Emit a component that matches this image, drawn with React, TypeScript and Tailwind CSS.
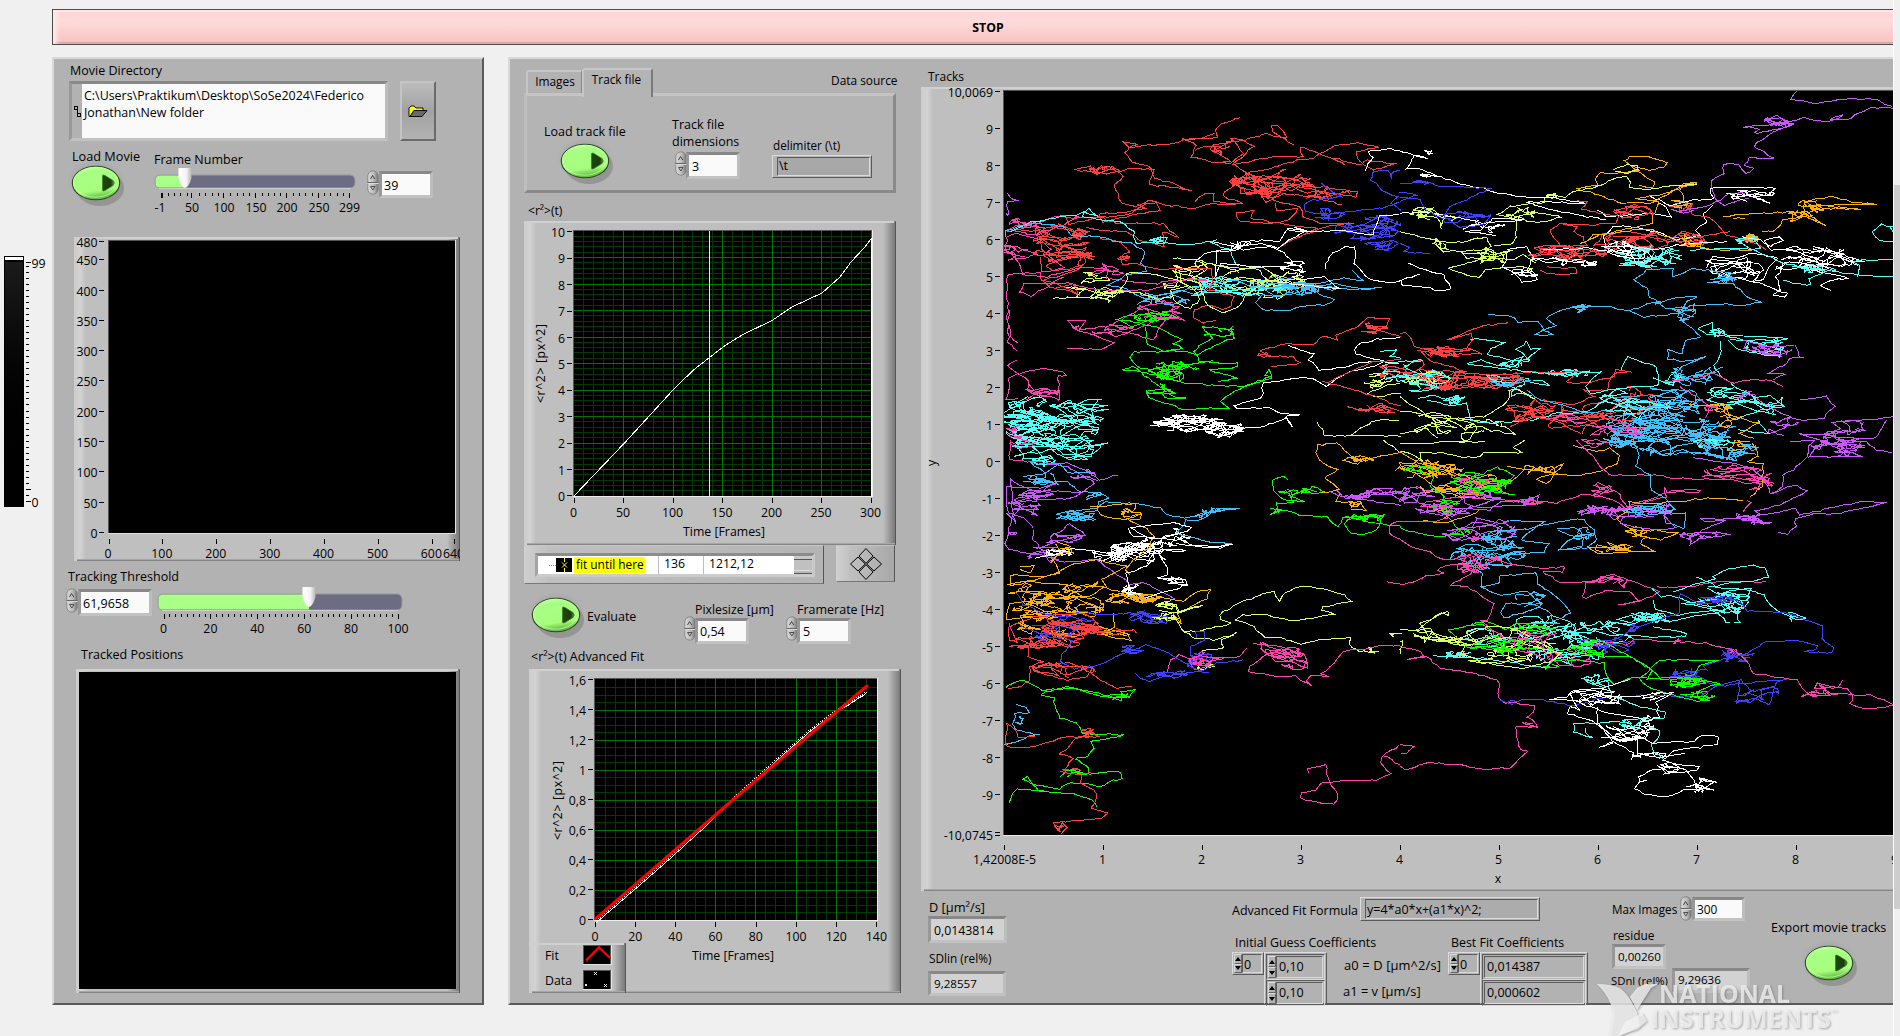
import React from "react";

/* ---------- palette ---------- */
const R = "#ff4040";
const W = "#ffffff";
const C = "#52fff6";
const B = "#3fc0ff";
const N = "#4040ff";
const P = "#ff40b4";
const V = "#cc55ff";
const Y = "#d8ff6a";
const O = "#ffb010";
const G = "#10ff00";

/* ---------- small building blocks ---------- */
function L({ className = "", children }: { className?: string; children: React.ReactNode }) {
  return <div className={"h-[17px] shrink-0 leading-[17px] whitespace-nowrap " + className}>{children}</div>;
}

function Well({ className = "", children }: { className?: string; children?: React.ReactNode }) {
  return (
    <div
      className={
        "shrink-0 overflow-hidden border-[3px] border-t-[#888888] border-r-[#bdbdbd] border-b-[#c2c2c2] border-l-[#989898] whitespace-nowrap " +
        className
      }
    >
      {children}
    </div>
  );
}

function Classic({ className = "", children }: { className?: string; children?: React.ReactNode }) {
  return (
    <div className={"flex shrink-0 border border-t-[#dcdcdc] border-r-[#5a5a5a] border-b-[#5a5a5a] border-l-[#dcdcdc] " + className}>
      {children}
    </div>
  );
}

function Inset({ className = "", children }: { className?: string; children?: React.ReactNode }) {
  return (
    <div
      className={
        "flex-1 border border-t-[#5a5a5a] border-r-[#dcdcdc] border-b-[#dcdcdc] border-l-[#5a5a5a] whitespace-nowrap " +
        className
      }
    >
      {children}
    </div>
  );
}

function Spinner({ className = "" }: { className?: string }) {
  return (
    <svg className={"shrink-0 " + className} width="12" height="25" viewBox="0 0 12 25">
      <rect x="0.8" y="0.8" width="10.4" height="23.4" rx="5.2" fill="url(#spin)" stroke="#7c7c7c" strokeWidth="0.8" />
      <path d="M0.5 12.5H11.5" stroke="#666" />
      <path d="M0.5 13.5H11.5" stroke="#dadada" />
      <path d="M3.5 9 L5.5 5.5 L7.8 9" fill="none" stroke="#444" />
      <path d="M3.5 16.5H8 L5.8 20 Z" fill="#c4c4c4" stroke="#444" strokeWidth="0.9" />
    </svg>
  );
}

function MiniArrows() {
  return (
    <div className="flex w-[8px] shrink-0 flex-col">
      <div className="flex flex-1 items-center justify-center border border-t-[#dcdcdc] border-r-[#666] border-b-[#666] border-l-[#dcdcdc]">
        <svg width="6" height="4" viewBox="0 0 6 4" className="shrink-0"><path d="M3 0L6 4H0Z" /></svg>
      </div>
      <div className="flex flex-1 items-center justify-center border border-t-[#dcdcdc] border-r-[#666] border-b-[#666] border-l-[#dcdcdc]">
        <svg width="6" height="4" viewBox="0 0 6 4" className="shrink-0"><path d="M0 0H6L3 4Z" /></svg>
      </div>
    </div>
  );
}

function GreenButton({ className = "" }: { className?: string }) {
  return (
    <svg className={"shrink-0 " + className} width="60" height="50" viewBox="0 0 60 50">
      <ellipse cx="29" cy="22" rx="29" ry="22" fill="url(#halo)" opacity="0.55" />
      <ellipse cx="33" cy="29" rx="24" ry="18" fill="#8b8b8b" opacity="0.75" />
      <ellipse cx="29" cy="24" rx="23.7" ry="16.8" fill="url(#grn)" stroke="#2c4a20" strokeWidth="1.1" />
      <ellipse cx="28.5" cy="23.2" rx="22" ry="15" fill="none" stroke="#c6ffb0" opacity="0.7" />
      <path d="M35.500 16.500Q36 15.600 38 16.500L46 21.500Q48.500 24 46 26.500L38 31.500Q36 32.400 35.500 31.500Z" fill="url(#arr)" stroke="#3f7a28" strokeWidth="0.8" />
    </svg>
  );
}

function Defs() {
  return (
    <svg className="absolute h-0 w-0">
      <defs>
        <linearGradient id="spin">
          <stop offset="0" stopColor="#dedede" />
          <stop offset="0.6" stopColor="#b8b8b8" />
          <stop offset="1" stopColor="#757575" />
        </linearGradient>
        <radialGradient id="halo">
          <stop offset="0.6" stopColor="#8c8c8c" stopOpacity="0.9" />
          <stop offset="1" stopColor="#a8a8a8" stopOpacity="0" />
        </radialGradient>
        <linearGradient id="grn" x1="0" x2="0.2" y1="0" y2="1">
          <stop offset="0" stopColor="#d4ffc0" />
          <stop offset="0.22" stopColor="#a9ff84" />
          <stop offset="0.8" stopColor="#a6fd7e" />
          <stop offset="1" stopColor="#66bf42" />
        </linearGradient>
        <linearGradient id="arr">
          <stop offset="0" stopColor="#1b4a0b" />
          <stop offset="0.7" stopColor="#1d3a10" />
          <stop offset="1" stopColor="#5a9a3c" />
        </linearGradient>
        <linearGradient id="bezL">
          <stop offset="0" stopColor="#cbcbcb" />
          <stop offset="0.5" stopColor="#d3d3d3" />
          <stop offset="1" stopColor="#bfbfbf" />
        </linearGradient>
        <linearGradient id="bezR">
          <stop offset="0" stopColor="#bfbfbf" />
          <stop offset="1" stopColor="#747474" />
        </linearGradient>
        <linearGradient id="knob">
          <stop offset="0" stopColor="#ffffff" />
          <stop offset="0.6" stopColor="#f4f4f4" />
          <stop offset="1" stopColor="#b5b5b5" />
        </linearGradient>
      </defs>
    </svg>
  );
}

function range(n: number) {
  return Array.from({ length: n }, (_, i) => i);
}

/* Raised bezel that surrounds every graph; drawn in local pixels. */
function Bezel({ w, h }: { w: number; h: number }) {
  return (
    <g shapeRendering="crispEdges">
      <rect width={w} height={h} fill="#bfbfbf" />
      <rect width={12} height={h} fill="url(#bezL)" />
      <rect x={w - 13} width={13} height={h} fill="url(#bezR)" />
      <rect width={w - 2} height={2} fill="#d0d0d0" />
      <path d={`M3 ${h - 1.5}H${w}`} stroke="#a6a6a6" />
      <path d={`M3 ${h - 0.5}H${w}`} stroke="#858585" />
      <path d={`M${w - 0.5} 1V${h}`} stroke="#555" />
    </g>
  );
}

type SliderProps = {
  w: number; h: number; x0: number; bar: number; barH: number; knob: number; drop: number;
  ticks: number[]; majors: number[]; labels: [number, string][];
};

function Slider({ w, h, x0, bar, barH, knob, drop, ticks, majors, labels }: SliderProps) {
  const ty = 7 + barH + drop;
  return (
    <svg width={w} height={h} className="shrink-0 overflow-visible" fontSize="12.3">
      <rect x={x0} y="7" width={bar} height={barH} rx="5" fill="#6c6c84" stroke="#9a9a9a" />
      <path d={`M${x0 + 4} ${7 + barH + 0.6}H${x0 + bar - 4}`} stroke="#d2d2d2" />
      <path
        d={`M${knob} 7.5H${x0 + 5}Q${x0 + 0.5} 7.5 ${x0 + 0.5} 12V${barH + 2}Q${x0 + 0.5} ${barH + 6.5} ${x0 + 5} ${barH + 6.5}H${knob}Z`}
        fill="#aaff87"
      />
      <path d={`M${knob - 6.5} 0H${knob + 6.5}V10Q${knob + 4} 19 ${knob} 20Q${knob - 4} 19 ${knob - 6.5} 10Z`} fill="url(#knob)" />
      <g shapeRendering="crispEdges" stroke="#000">
        {ticks.map((x) => <path key={x} d={`M${Math.floor(x) + 0.5} ${ty}v3`} />)}
        {majors.map((x) => <path key={x} d={`M${Math.floor(x) + 0.5} ${ty}v5`} />)}
      </g>
      {labels.map(([x, t]) => <text key={t} x={x} y={ty + 19} textAnchor="middle">{t}</text>)}
    </svg>
  );
}

/* ---------- graphs ---------- */
const IMAGE_Y: [number, string][] = [
  [4, "480"], [22, "450"], [53, "400"], [83, "350"], [113, "300"], [143, "250"],
  [174, "200"], [204, "150"], [234, "100"], [265, "50"], [295, "0"],
];

function ImageGraph() {
  return (
    <svg className="ml-[20px] shrink-0 overflow-hidden" width="386" height="324" fontSize="12.3">
      <Bezel w={386} h={324} />
      <rect x="34" y="3" width="348" height="294" fill="#e2e2e2" />
      <rect x="34" y="3" width="347" height="293" fill="#555" />
      <rect x="35" y="4" width="346" height="292" />
      <g shapeRendering="crispEdges" stroke="#000">
        {IMAGE_Y.map(([y, t]) => <path key={t} d={`M25 ${y + 0.5}h5`} />)}
        {range(7).map((i) => <path key={i} d={`M${Math.floor(35 + i * 53.9) + 0.5} 302v5`} />)}
        <path d="M380.5 302v5" />
      </g>
      {IMAGE_Y.map(([y, t]) => <text key={t} x="23.5" y={Math.max(y + 6, 10)} textAnchor="end">{t}</text>)}
      {range(7).map((i) => <text key={i} x={34 + i * 53.9} y="320.5" textAnchor="middle">{i * 100}</text>)}
      <text x="369" y="320.5">640</text>
    </svg>
  );
}

type GridProps = { x0: number; y0: number; w: number; h: number; dx: number; dy: number; sx: number; sy: number };

function Grid({ x0, y0, w, h, dx, dy, sx, sy }: GridProps) {
  const nx = Math.floor(w / dx + 0.5);
  const ny = Math.floor(h / dy + 0.5);
  const xs = range(nx).slice(1);
  const ys = range(ny).slice(1);
  const v = (i: number) => `M${Math.floor(x0 + i * dx) + 0.5} ${y0}v${h}`;
  const r = (i: number) => `M${x0} ${Math.floor(y0 + h - i * dy) + 0.5}h${w}`;
  return (
    <g shapeRendering="crispEdges" fill="none">
      <path d={xs.filter((i) => i % sx).map(v).join("") + ys.filter((i) => i % sy).map(r).join("")} stroke="#003c00" />
      <path d={xs.filter((i) => i % sx === 0).map(v).join("") + ys.filter((i) => i % sy === 0).map(r).join("")} stroke="#007800" />
    </g>
  );
}

function MsdGraph() {
  return (
    <svg className="shrink-0" width="372" height="324" viewBox="524 221 372 324" fontSize="12.3">
      <g transform="translate(524 221)"><Bezel w={372} h={324} /></g>
      <rect x="573" y="230" width="300" height="267" fill="#eee" />
      <rect x="573" y="230" width="299" height="266" fill="#555" />
      <rect x="574" y="231" width="297" height="265" />
      <Grid x0={574} y0={231} w={297} h={265} dx={9.9} dy={5.3} sx={5} sy={5} />
      <path
        d="M574 496L624.5 443 673 390 693.5 370 709.5 357.5 725 345.5 743 334.5 772 320.5 792 307 808 299.5 822 293 840 277 851 262 864 248 871 239V496"
        fill="none" stroke="#fff" shapeRendering="crispEdges"
      />
      <path d="M709.5 231V496" stroke="#ffff40" shapeRendering="crispEdges" />
      {range(11).map((i) => (
        <g key={i}>
          <path d={`M567 ${Math.floor(495.8 - i * 26.4) + 0.5}h5`} stroke="#000" shapeRendering="crispEdges" />
          <text x="565" y={501 - i * 26.4} textAnchor="end">{i}</text>
        </g>
      ))}
      {range(7).map((i) => (
        <g key={i}>
          <path d={`M${Math.floor(574.2 + i * 49.5) + 0.5} 498v5`} stroke="#000" shapeRendering="crispEdges" />
          <text x={573.5 + i * 49.5} y="517" textAnchor="middle">{i * 50}</text>
        </g>
      ))}
      <text x="683" y="536" textLength="82">Time [Frames]</text>
      <text transform="translate(544.5 403) rotate(-90)" textLength="79">{"<r^2> [px^2]"}</text>
    </svg>
  );
}

const FIT_LABELS = ["0", "0,2", "0,4", "0,6", "0,8", "1", "1,2", "1,4", "1,6"];
const FIT_DATA = [
  [597, 921], [633, 890], [673, 855], [700, 830.5], [733, 799], [757, 777.5], [783, 754],
  [813, 728], [833, 713], [850, 703], [867, 692],
];

function fitY(x: number) {
  const k = Math.max(1, FIT_DATA.findIndex((p) => p[0] >= x));
  const [a, b] = [FIT_DATA[k - 1], FIT_DATA[k]];
  return a[1] + ((b[1] - a[1]) * (x - a[0])) / (b[0] - a[0]);
}

function FitGraph() {
  const marks = range(135).map((i) => {
    const x = Math.round(597 + i * 2);
    const y = Math.round(fitY(x));
    return `M${x - 1} ${y - 1}h1v1h1v1h-1v-1h-1zM${x + 1} ${y - 1}h1v1h-1zM${x - 1} ${y + 1}h1v1h-1z`;
  }).join("");
  return (
    <svg className="shrink-0" width="372" height="324" viewBox="529 669 372 324" fontSize="12.3">
      <g transform="translate(529 669)"><Bezel w={372} h={324} /></g>
      <rect x="594" y="678" width="284" height="243" fill="#eee" />
      <rect x="594" y="678" width="283" height="242" fill="#555" />
      <rect x="595" y="679" width="282" height="241" />
      <Grid x0={595} y0={679} w={282} h={241} dx={10.05} dy={7.5} sx={4} sy={4} />
      <path d={marks} fill="#fff" shapeRendering="crispEdges" />
      <path d="M596 918.5L640 880.5 731 801.500 867 686" fill="none" stroke="#f00" strokeWidth="3" strokeLinecap="round" />
      {FIT_LABELS.map((t, i) => (
        <g key={t}>
          <path d={`M588 ${919.5 - i * 30}h5`} stroke="#000" shapeRendering="crispEdges" />
          <text x="586" y={925 - i * 30} textAnchor="end">{t}</text>
        </g>
      ))}
      {range(8).map((i) => (
        <g key={i}>
          <path d={`M${Math.floor(595.3 + i * 40.2) + 0.5} 922v5`} stroke="#000" shapeRendering="crispEdges" />
          <text x={595 + i * 40.2} y="941" textAnchor="middle">{i * 20}</text>
        </g>
      ))}
      <text x="692" y="960" textLength="82">Time [Frames]</text>
      <text transform="translate(561.5 840) rotate(-90)" textLength="79">{"<r^2> [px^2]"}</text>
      <g transform="translate(529 943)">
        <Bezel w={97} h={50} />
        <text x="16" y="17">Fit</text>
        <text x="16" y="42">Data</text>
        <g shapeRendering="crispEdges">
          <path d="M54 2h29v20h-29zM54 27h29v20h-29z" fill="#e4e4e4" />
          <path d="M54 2h28v19h-28zM54 27h28v19h-28z" fill="#555" />
          <path d="M55 3h26v18h-26zM55 28h26v18h-26z" />
        </g>
        <path d="M57 17.5L70 4.5L81 15" fill="none" stroke="#f00" strokeWidth="2.4" />
        <path d="M65 29l3 3m0-3l-3 3M56 41l2 2m0-2l-2 2M75 41l3 3m0-3l-3 3" stroke="#fff" strokeWidth="0.9" />
      </g>
    </svg>
  );
}

/* ---------- particle tracks ---------- */
let seed = 11;
function rnd() {
  seed = (seed + 0x6d2b79f5) | 0;
  let t = Math.imul(seed ^ (seed >>> 15), 1 | seed);
  t = (t + Math.imul(t ^ (t >>> 7), 61 | t)) ^ t;
  return ((t ^ (t >>> 14)) >>> 0) / 4294967296 - 0.5;
}

/* The plane is split in four tiles; track coordinates are thirds of a pixel inside a tile. */
type Tile = [number, number];
const NW: Tile = [900, 50];
const NE: Tile = [1400, 50];
const SW: Tile = [900, 440];
const SE: Tile = [1400, 440];

type Track = [Tile, string, string];
type Cloud = [Tile, string, number, number, number, number, number];

/* A path through way-points, roughened between them. */
function trackPath([[ox, oy], , pts]: Track) {
  const n = pts.trim().split(/[ ,]+/).map(Number);
  let x = ox + n[0] / 3;
  let y = oy + n[1] / 3;
  let d = `M${x.toFixed(1)} ${y.toFixed(1)}`;
  for (let i = 2; i < n.length; i += 2) {
    const tx = ox + n[i] / 3;
    const ty = oy + n[i + 1] / 3;
    const parts = Math.max(1, Math.round(Math.hypot(tx - x, ty - y) / 5));
    for (let k = 1; k <= parts; k++) {
      const f = k / parts;
      d += `L${(x + (tx - x) * f + rnd() * 2.6).toFixed(1)} ${(y + (ty - y) * f + rnd() * 1.5).toFixed(1)}`;
    }
    x = tx;
    y = ty;
  }
  return d;
}

/* A tangled walk kept inside an ellipse. */
function cloudPath([[ox, oy], , cx0, cy0, rx0, ry0, steps]: Cloud) {
  const cx = ox + cx0 / 3, cy = oy + cy0 / 3, rx = rx0 / 3, ry = ry0 / 3;
  let x = cx, y = cy, vx = 0, vy = 0;
  const s = Math.min(11, 3 + rx * 0.22);
  let d = `M${x.toFixed(1)} ${y.toFixed(1)}`;
  for (let i = 0; i < steps; i++) {
    vx = vx * 0.82 + rnd() * s - ((x - cx) / rx) * s * 0.04;
    vy = vy * 0.6 + rnd() * s * 0.55 - ((y - cy) / ry) * s * 0.03;
    if (Math.hypot((x + vx - cx) / rx, (y + vy - cy) / ry) > 1.1) {
      vx = -Math.sign(x - cx) * Math.abs(vx) * 0.6;
      vy = -Math.sign(y - cy) * Math.abs(vy) * 0.6;
    }
    x += vx;
    y += vy;
    d += `L${x.toFixed(1)} ${y.toFixed(1)}`;
  }
  return d;
}

const TRACKS: Track[] = [
  [NW, R, "1020,203 965,220 943,240 955,262 850,268 890,285 872,320 960,340 992,332 930,300 945,285 1035,270 1100,250 1122,258 1165,265 1130,225 1112,225 1115,245 1180,285"],
  [NW, R, "945,250 900,265 850,270 820,282 735,287 690,293 670,278 710,282 690,290 672,310 700,335 755,355 762,385 820,400 875,422 800,408 745,405 760,358 700,355 620,370 525,360 570,350 590,375 640,350 670,380 642,405 665,460 710,468 750,450 800,465 880,475 940,460 1005,465"],
  [NW, R, "885,455 910,430 940,430 940,455 1030,460 970,440 975,425 1040,370 1110,355 1190,330 1240,325 1300,288 1370,278 1435,290 1370,305 1370,325 1420,360 1490,342 1400,330 1380,345 1300,325 1335,343 1250,310 1200,290 1210,320 1130,320 1070,330 1000,345 1060,290 1030,270 990,265 1030,310 990,340 960,335"],
  [NW, R, "1000,340 1040,370 1090,385 1150,395 1200,410 1260,425 1370,440 1370,425 1300,415 1220,430 1180,410 1120,420 1060,410 1100,455 1150,430 1240,440 1325,465"],
  [NW, R, "1125,460 1130,480 1195,475 1170,510 1110,520 1020,515 1010,490 1060,480 1050,505 1140,520 1250,535 1170,570 1140,590 1200,560 1280,530 1360,520 1260,520 1210,500 1200,470 1120,450"],
  [NW, R, "710,462 740,475 650,490 600,490 605,515 780,480 770,460 740,460 690,490 640,500 500,505 505,525 600,500 650,520 790,520 835,562 790,545 790,590 730,575 680,545 600,540 560,530"],
  [NW, R, "350,545 420,540 430,560 500,565 480,580 550,610 555,640 520,665 470,680 430,690 470,700 540,735"],
  [NW, R, "600,565 660,575 690,605 660,620 665,645 700,640 780,660 840,655 930,655 940,690 930,720 1000,740 990,770 970,780 920,765 880,780 885,805 910,818 950,812"],
  [NW, R, "420,620 425,690 450,710 535,730 520,700 465,715"],
  [NW, P, "355,880 330,860 322,800 322,672 400,670 490,655 440,610 450,600 420,570 350,550 320,560 320,600 360,640 370,672 440,680 560,650 630,660 620,690"],
  [NW, P, "630,685 690,695 770,700 810,690 920,690 860,685 750,720 600,720 500,700 370,703 360,725 395,740 440,710 490,680"],
  [NW, P, "320,545 390,530 470,497 540,500 490,525 400,555 330,540 350,525 420,520 370,520"],
  [NW, P, "500,895 600,900 640,880 600,860 520,835 505,810 555,812 540,840 600,830 700,850 760,868 780,830 820,790 850,810 780,800 740,825 650,860 630,850 620,830 690,795 740,765 820,760"],
  [NW, P, "352,903 325,875 325,780"],
  [NW, P, "352,930 320,945 355,972 430,955 490,965 498,978 475,975 475,1030 480,1050 380,1020 385,990 355,972 325,985 322,1050 350,1045"],
  [NW, P, "380,1050 430,1015 475,1025 430,1040 400,1020 380,1000"],
  [NW, C, "330,545 395,515 500,498 545,490 570,475 592,500 555,485 545,500 640,515 660,515 700,545 710,578 790,580 800,560 750,570 810,580 880,585 950,570 935,580 990,600 1000,630 1020,650"],
  [NW, B, "315,565 320,540 400,520 490,530 510,555 600,560 640,575 690,575 735,605 725,640 740,665 680,675 620,705 660,710 720,740 760,750 800,740 870,715 940,705 1010,720"],
  [NW, B, "710,765 740,745 840,720 900,735 940,700 1010,690 1070,720 1100,700 1180,700 1260,700 1330,685 1390,690 1355,660"],
  [NW, B, "1065,760 1090,735 1140,740 1200,725 1230,710 1260,735 1305,750 1270,765 1200,770 1160,783 1090,780 1065,760"],
  [NW, B, "1280,710 1350,720 1445,712 1390,718 1300,700 1200,720"],
  [NW, W, "890,630 930,605 1010,602 1040,575 1100,570 1140,575 1160,540 1240,545 1180,530 1210,545 1130,595 1085,580 1010,590 990,600 950,600 945,680 960,640 1050,650 1160,648 1180,640 1150,605 1110,590 1030,600 940,575"],
  [NW, W, "1150,655 1215,665 1180,680 1190,690 1270,680 1325,718 1250,710 1130,695"],
  [NW, W, "1275,660 1272,645 1300,610 1340,590 1365,590 1365,640 1385,665 1400,685 1470,698 1500,692"],
  [NW, W, "1395,362 1405,340 1420,325 1405,305 1440,300 1460,295 1500,302"],
  [NW, W, "1160,535 1240,545 1330,540 1420,555 1440,500 1500,495"],
  [NW, N, "1265,400 1290,420 1325,440 1240,450 1215,460 1215,485 1280,495 1380,480 1450,475 1490,460 1500,460"],
  [NW, N, "1500,360 1470,375 1480,390 1465,360 1420,365 1415,390 1450,420 1490,440 1470,460 1500,480"],
  [NW, Y, "460,745 530,742 555,718 500,712 545,715 640,740 680,700 680,670 750,670 830,690 860,710 810,720 830,760 870,775 900,750 880,720 840,690 835,660 930,640 1010,660 1090,650 1140,690"],
  [NW, Y, "820,625 890,630 950,645 1080,660 1100,690 1030,740 1020,770 970,788 920,765 900,700 830,680"],
  [NW, Y, "500,740 580,745 650,720 720,730 780,750 820,735"],
  [NW, Y, "1250,1115 1270,1140 1275,1158 1400,1155 1500,1158"],
  [NW, Y, "1500,1110 1430,1110 1380,1135 1350,1160"],
  [NW, Y, "1500,1000 1460,1005 1400,1030 1420,1040 1500,1030"],
  [NW, G, "645,810 700,795 790,790 830,800 740,815 690,830 660,810 720,820 770,830 845,870 820,880 850,895 790,905 700,905 690,920 710,950 750,960 820,945"],
  [NW, G, "735,830 740,880 790,905 860,905 890,915 960,880 1000,865 995,845 940,830 905,832 940,865 900,885 885,905 900,935 1010,940 1010,950 930,960 1015,985 950,995"],
  [NW, G, "670,960 720,965 810,985 860,1000 940,1005 1040,1010 1115,985 1110,960 1090,975 1115,980 1030,1010 980,1040 965,1055 990,1075 920,1075 855,1080 800,1060 750,1045 740,1030 830,1030 780,1010 700,950 670,960"],
  [NW, W, "1200,1095 1140,1090 1105,1072 1010,1075 1000,1065 1085,1045 1090,1000 1190,985 1240,985 1280,1010 1310,985 1350,965 1420,950 1450,935 1500,940"],
  [NW, W, "1165,885 1200,900 1245,912 1225,930 1260,960 1340,950 1380,935 1460,935 1400,920 1365,910 1370,885 1430,868 1500,862"],
  [NW, W, "1000,1140 1080,1130 1160,1105 1175,1130 1155,1100 1195,1095"],
  [NW, R, "1080,903 1110,920 1180,920 1200,940 1110,952"],
  [NW, R, "1080,903 1160,880 1240,885 1270,860 1315,870 1310,855 1380,825 1400,805 1465,805 1460,830 1400,830 1470,850 1500,860"],
  [NW, R, "1280,1000 1350,965 1420,935 1500,928"],
  [NW, R, "1265,995 1350,1015 1440,1045 1500,1070"],
  [NW, R, "1340,1070 1400,1085 1450,1065 1500,1085"],
  [NW, C, "1440,905 1490,900 1470,920 1500,925"],
  [NW, V, "322,430 335,445 355,452 320,455 325,495 318,492"],

  [NE, V, "1190,123 1175,150 1225,155 1245,160 1330,147 1425,147 1450,160 1480,167"],
  [NE, V, "1480,175 1415,172 1380,187 1350,205 1290,207 1325,197 1285,217 1235,210 1210,203 1160,220 1100,210 1130,197 1165,215 1110,225 1030,230 1075,237 1060,250 1100,245 1180,225 1120,245 1060,287 1085,300 1118,325 1050,325 1030,345 1060,355 1035,372 1020,345 985,340 965,352 970,370 935,390 933,415 945,445 970,465 1045,445"],
  [NE, V, "1035,430 985,430 960,450 920,470 840,485 810,478 850,490 880,480"],
  [NE, W, "0,303 80,325 45,315 20,355 65,358 110,375 80,380 70,372 120,380 180,403 250,415 300,430 380,443 440,440 530,455 560,460 430,455 380,458 480,485 560,500 620,510"],
  [NE, W, "0,490 80,485 180,505 250,520 370,510 280,505 240,540 200,545 290,555"],
  [NE, W, "750,440 810,465 880,450 940,445 930,415 1040,412 1125,415 1110,435 1060,440 1110,460 1050,435 980,430 1040,455"],
  [NE, W, "590,480 620,500 700,495 760,490 810,500 800,470 750,440"],
  [NE, W, "940,465 910,490 920,515 890,540 900,555 830,570 770,545 700,530 640,530 610,560 620,590 700,590 770,600 830,585 900,580 980,575"],
  [NE, W, "1025,560 1080,570 1110,590 1145,570 1140,560 1090,572 1110,600 1200,600 1300,605 1390,635 1350,635 1290,615 1280,640 1200,650 1280,670 1345,685 1290,690 1260,705 1290,720"],
  [NE, W, "920,655 940,620 1000,625 1060,610 1135,625 1110,650 1085,690 1055,695 1090,660 1075,640 1020,640 960,665 990,680 1080,700 1160,730 1155,742 1115,735 1140,720 1130,680 1150,640"],
  [NE, W, "430,600 560,595 600,600 640,605 700,600"],
  [NE, W, "25,640 60,655 130,675 155,715 120,722 60,708 10,705 5,690 60,670"],
  [NE, W, "320,600 380,590 400,620 380,660 415,690 365,697 340,665 310,650 325,600"],
  [NE, N, "0,400 90,395 110,407 200,412 275,415 240,430 200,450 150,470 130,500 180,530 250,525 270,500 180,485 110,500 80,480 60,450 0,440"],
  [NE, N, "0,455 50,435 0,425"],
  [NE, N, "0,580 30,590 10,605 90,610"],
  [NE, O, "670,333 690,320 745,320 800,337 790,350 745,362 700,350 670,330 720,370 765,395 760,415 720,405"],
  [NE, O, "720,362 650,370 600,368 587,385 590,405 530,415 600,435 650,457 700,460 760,458 840,410 890,398 850,402 840,420 855,455 830,460"],
  [NE, O, "890,400 780,435 710,445 780,455 760,500 755,520 650,545 580,555 560,575 545,580 600,555 700,540 760,540 790,560 860,565"],
  [NE, O, "970,500 1060,490 1160,487 1215,485 1210,455 1290,440 1370,458 1430,462 1290,465 1225,465 1380,478 1280,475 1215,490 1280,528 1215,500 1150,510 1130,540 1090,545"],
  [NE, O, "1055,600 940,600 860,580 850,560"],
  [NE, O, "1000,505 1035,505"],
  [NE, Y, "890,403 830,405 745,420 690,410 695,395 680,380 640,387 590,410 525,425 495,440 440,435 435,460 390,460 330,470 290,495 340,505 400,485 485,500 440,515 380,515 355,500 350,545 340,580 280,590"],
  [NE, Y, "640,360 680,343 710,345 715,360 680,370 645,362"],
  [NE, Y, "0,545 100,570 160,580 260,560 275,590 250,610 185,610 200,625 280,620 280,600 130,605 105,580"],
  [NE, Y, "145,655 200,675 240,682 260,660 330,650 400,655"],
  [NE, Y, "145,655 250,625 330,630 370,615 405,640"],
  [NE, R, "530,452 560,455 545,475 600,490 660,500 700,475 760,495 740,470 700,465 650,480"],
  [NE, R, "450,540 480,520 560,525 650,520 660,490"],
  [NE, R, "450,540 480,590 560,585 550,560 520,545 530,530 480,520"],
  [NE, R, "860,470 880,495 930,500 960,530 980,555 1070,580 1100,600"],
  [NE, R, "640,560 740,560 800,570 850,545 900,560 990,545"],
  [NE, R, "420,660 440,670 530,672 530,655 440,650"],
  [NE, C, "870,600 960,597 1080,595 1060,560 1010,570 1050,595 1150,640 1280,660 1370,675 1480,680"],
  [NE, C, "1480,627 1360,633 1380,645 1370,680"],
  [NE, C, "1480,575 1435,572 1415,545 1445,523 1480,530"],
  [NE, C, "1480,555 1470,530"],
  [NE, C, "1150,690 1180,700 1235,705 1230,685 1280,665 1180,650"],
  [NE, B, "265,793 330,797 350,815 410,815 430,835 410,855 460,853 430,840 465,825 440,805 480,780 530,770 620,770 690,783 740,762 780,758 830,740 890,740 860,755 830,800 860,805 885,790 880,760"],
  [NE, B, "690,783 730,800 800,795 840,790 870,765 990,762 1025,768 1085,755 1040,740 1000,700 925,700 1010,680 930,690 1000,670 960,665 880,655 820,680 820,655 740,660 700,690 745,715 750,740 800,775 860,770"],
  [NE, B, "840,805 900,860 860,870 845,910 805,900 805,925 850,935 920,920 850,950 830,970 880,990 910,985 970,950"],
  [NE, C, "895,835 940,815 940,835 985,855 1160,865 1080,880 990,860 920,852 895,835"],
  [NE, C, "985,870 1010,895 1070,910 1140,920 1140,900 1060,875 990,870"],
  [NE, C, "960,870 960,920 940,945 960,980 1000,1005 1060,1040"],
  [NE, V, "1030,870 1100,890 1185,885 1195,920 1215,925 1180,920 1150,945 1105,970 1155,972 1115,990"],
  [NE, V, "1040,875 1035,895 1100,915 1140,915 1180,900"],
  [NE, V, "1200,1050 1280,1037 1305,1070 1275,1090 1270,1105 1210,1112 1150,1095 1100,1065 1060,1035 1020,1030"],
  [NE, V, "1480,1100 1430,1107 1300,1115 1320,1135 1270,1160 1370,1165 1430,1165 1460,1110"],
  [NE, P, "790,995 850,990 940,970 1000,1000 1050,990 1110,990 1150,1010"],
  [NE, P, "840,1010 890,1040 930,1070 920,1105"],
  [NE, R, "325,818 240,830 190,850 145,870 215,850 215,870 200,900"],
  [NE, R, "0,850 20,850 45,890 110,905 200,895 250,910 150,915 80,905 50,900"],
  [NE, R, "60,900 90,935 160,950 200,970 300,975 400,965 480,968 545,965 495,997 560,1000 640,980 650,960 700,965 640,970 620,1020 550,1020 580,1040 520,1065 430,1050"],
  [NE, C, "210,870 240,867 315,880 270,895 265,915 340,930 365,920 350,950 290,945 240,930 200,940 300,955 390,965 480,975 600,965 560,1010 570,1030 660,1015 780,1005 770,950 720,935 680,918 660,960"],
  [NE, C, "380,875 390,895 420,897 385,925 350,900 380,875"],
  [NE, Y, "0,1040 60,1080 80,1100 180,1110 220,1120 200,1140 140,1105 250,1100 320,1060 330,1020 360,1020 400,1045"],
  [NE, Y, "0,1150 80,1135 110,1165"],
  [NE, C, "80,1050 150,1065 200,1060 215,1110 260,1120 400,1110 470,1090 560,1085 640,1040"],
  [NE, B, "380,1020 420,1050 490,1065 560,1090 640,1080"],
  [NE, R, "330,1130 400,1100 460,1110 540,1150"],
  [NE, C, "1000,1110 1080,1080 1150,1070 1110,1035 1050,1050 1000,1060"],
  [NE, C, "1075,1110 1090,1135 1110,1150 1010,1140"],
  [NE, O, "850,1060 900,1070 970,1060 990,1095 1075,1120 1020,1150 1060,1165"],

  [SW, P, "330,0 330,60 380,65 430,65"],
  [SW, V, "655,105 600,120 580,100 500,70 440,70 500,80 585,130 540,160 430,150 470,130 420,145 320,140 325,220 340,225 360,200 340,180 400,165 420,180 510,175 550,155"],
  [SW, V, "320,220 350,250 340,225 315,310 330,330 380,340 430,345 480,365 590,360 640,395 680,420 690,435 730,425 760,445 825,475"],
  [SW, V, "400,270 400,300 420,325 460,310 450,290 490,270 510,250 555,285 480,300 450,300"],
  [SW, V, "400,265 370,235 340,225 330,120 390,150 430,155"],
  [SW, B, "370,125 500,125 545,155 600,160 625,175 600,185 590,210 470,235 590,240 560,225 500,215 590,205 620,187 700,190 780,205 800,225 850,235 900,225 970,205 1018,205 940,215 900,240 860,240 830,280 920,305 995,312"],
  [SW, B, "370,110 430,100 480,70 500,100 580,100"],
  [SW, O, "570,200 640,195 710,190 700,215 730,220 720,240 640,235 600,225 590,205"],
  [SW, O, "680,235 720,260 740,265 760,290 750,320 700,360 680,390 690,405"],
  [SW, O, "460,360 480,400 420,410 330,405 330,440 400,420 460,405 520,370 600,360 680,380 640,400 605,420 620,445 660,455"],
  [SW, O, "470,305 510,320 480,330 465,315"],
  [SW, O, "360,380 400,380 390,400 360,390"],
  [SW, O, "320,435 370,425 500,435 545,445 500,470 420,480 330,490 320,540 350,535 430,535"],
  [SW, O, "700,475 800,475 850,485 890,455 935,450 920,475 860,510 835,520 840,550 820,520"],
  [SW, O, "640,520 640,560 610,580 630,590 690,600 680,580 600,560"],
  [SW, W, "685,265 700,290 780,295 860,275 875,260 820,250 760,255 690,262 740,290 840,300 880,315 940,320 995,312 960,325 900,322 830,310"],
  [SW, W, "405,355 460,345 520,325 600,335 650,350"],
  [SW, W, "750,370 700,395 680,400 685,450 665,455"],
  [SW, W, "780,350 800,380 800,405 770,415 860,420 865,435 800,430 865,435 740,470"],
  [SW, Y, "1010,577 965,600 970,625 910,632"],
  [SW, Y, "780,490 830,495 830,520 910,495 850,510 800,525 760,535 830,540 850,575 890,575 995,550 960,540 960,525 1010,490 1120,452 1135,485 1145,465 1200,438 1270,445 1330,465 1352,485 1270,500 1265,510 1305,523 1170,543 1100,525 1030,525 1010,540 1060,560 1090,590 1150,595 1200,612 1260,600 1350,595 1345,615 1380,635 1440,635"],
  [SW, Y, "850,575 880,592 940,600 1000,585"],
  [SW, P, "1500,615 1440,620 1330,635 1310,660 1290,680 1265,700 1285,712 1230,705 1220,725 1235,737 1190,710 1100,705 1050,695 1045,680 1100,645 1200,675 1220,685 1215,645 1150,620 1060,612"],
  [SW, P, "1040,625 1020,650 940,655 920,680 880,690 870,655 840,645 815,660 805,695"],
  [SW, N, "345,455 365,480 370,495 400,505 420,520 480,530 550,515 600,525 690,520 740,520 800,530 800,550 740,540"],
  [SW, N, "360,555 440,590 520,600 510,620 485,640 482,665 520,687 600,675 660,645 740,615 790,630 840,660 890,690 930,700"],
  [SW, N, "890,595 890,575 915,575 915,600 870,620 870,645"],
  [SW, N, "705,700 720,715 750,725 790,710 900,695 950,670 1025,660"],
  [SW, R, "695,738 650,745 600,720 570,700 540,675 580,685 560,710 500,720 430,700 400,690 450,675 540,680"],
  [SW, R, "325,745 350,745 390,720 390,680 430,665 380,650 385,620"],
  [SW, R, "710,580 700,570 600,575 520,570"],
  [SW, R, "330,550 325,600 350,605 330,560 400,530 550,520 600,550"],
  [SW, G, "318,745 320,735 370,722 430,750 530,745 600,760 660,780 665,755 705,750 690,770 600,770 500,740 440,755 425,765 460,775 465,800 480,835 530,850 550,880 670,885 620,895 570,905 580,925 565,950 525,955 570,985 570,1000"],
  [SW, G, "480,1010 500,990 570,1000 660,995 665,1018 640,1020 600,1040 550,1030 500,1030 480,1048 400,1035 370,1018 385,1010 415,1055 520,1060 580,1080 595,1100"],
  [SW, G, "328,1088 330,1070 350,1048 430,1052"],
  [SW, B, "348,793 375,800 390,820 345,820 340,850 350,870 420,885 385,890 350,905 312,915"],
  [SW, R, "320,850 318,920 350,925 400,920 500,890 600,890 545,870 575,865 570,880 520,900 500,930 480,940 520,955 500,980 490,995 535,1005 570,1000"],
  [SW, R, "320,850 350,870 355,895 405,890"],
  [SW, R, "545,1000 540,1030 585,1050 590,1075 575,1105 625,1120 610,1135 500,1145 460,1148 470,1170 490,1150 500,1165 480,1183"],
  [SW, P, "1225,998 1225,985 1275,973 1285,985 1280,1000 1290,1025 1315,1065 1300,1092 1250,1088 1200,1075 1205,1060 1250,1050 1260,1030 1340,1023 1430,1020 1470,1000 1440,970 1445,950 1500,915"],
  [SW, P, "1500,975 1465,950 1450,950"],
  [SW, P, "1460,425 1500,433"],
  [SW, P, "1500,297 1465,280 1470,255 1500,243"],
  [SW, G, "1165,120 1150,108 1120,120 1120,150 1150,180 1215,185 1170,165 1200,155 1280,160 1240,140 1220,155"],
  [SW, G, "1110,225 1130,205 1125,190 1180,190 1160,150"],
  [SW, G, "1110,205 1160,210 1200,225 1280,230 1310,260 1330,235 1360,230 1450,225 1430,270 1390,287 1350,280 1330,250 1360,225 1400,245 1500,260"],
  [SW, O, "1500,38 1400,60 1370,72 1330,60 1360,50 1310,10 1255,15 1250,40 1260,60 1310,90 1275,115 1320,148 1265,160"],
  [SW, O, "1320,160 1310,185 1380,185 1395,210 1350,210"],
  [SW, Y, "1450,0 1480,20 1500,35"],
  [SW, V, "1290,155 1340,175 1400,160 1500,155"],
  [SW, V, "1310,150 1330,170 1400,180 1500,195"],

  [SE, Y, "0,35 30,40 70,65 60,40 120,38 190,52 240,50 250,38 340,40 365,38 340,25 370,0"],
  [SE, Y, "0,10 80,10 150,5 250,5"],
  [SE, O, "0,35 60,70 130,90 200,110 260,140 320,130 370,95 380,75 440,100 490,70 480,85 440,130 410,120 440,105 540,105 600,95 650,70 655,45 630,25 590,35 520,18"],
  [SE, O, "320,80 400,90 460,100"],
  [SE, O, "0,85 50,100 110,145 180,150 180,170 280,180"],
  [SE, O, "60,140 80,160 140,150"],
  [SE, O, "70,240 130,250 200,230 240,210"],
  [SE, O, "1030,180 920,175 810,187 740,190 690,185 690,205 650,235 660,250 720,275 770,270 830,280 780,300 740,290 720,310 770,335 700,335 640,340 590,340 560,320 650,325"],
  [SE, O, "1050,170 1085,140 1090,70 1040,65 1075,50 1060,10"],
  [SE, P, "530,0 580,50 600,80 630,105 780,105 820,115 1000,120 1050,130 1120,130"],
  [SE, P, "0,245 100,245 140,235 160,200 60,200 80,185 180,170 300,180 390,180 470,190 560,160 650,185 680,210 560,215"],
  [SE, P, "590,125 650,155 680,200 740,180 820,150 900,150 895,160 800,155 790,140 800,170 720,190"],
  [SE, P, "0,297 40,325 90,335 120,357 150,360 220,340 280,360 350,375 440,385 495,380 490,395 430,395 480,427 600,425 600,410 640,405 740,440 780,455 730,480 690,490 655,493 720,485 690,455 620,450 560,475 550,470 560,430 600,415"],
  [SE, P, "0,435 40,425 80,410 130,400 110,390 150,375 200,375"],
  [SE, P, "215,400 150,437 200,440 280,490 265,540 240,545 310,590 420,600 440,650 480,675 540,680 570,670 570,620 620,605 680,615 700,598 830,605 920,610 1000,630 1040,660 1060,700 1130,712 1190,720 1210,750 1240,770 1310,760 1370,765 1410,765 1460,785 1480,795"],
  [SE, P, "1480,795 1440,805 1390,805 1350,790 1360,765 1340,745 1240,745 1250,730 1310,740 1330,720"],
  [SE, P, "1040,180 1050,190 1030,215"],
  [SE, P, "770,440 870,440 950,425 1095,425"],
  [SE, P, "0,620 60,635 75,650 20,658 80,650 120,685 200,695 295,720 298,775 320,787 405,795 400,815 385,830 415,860 345,860 355,920 380,935 330,983 240,988 160,972 90,968 20,988 0,980"],
  [SE, P, "0,912 40,920 20,940 0,940"],
  [SE, P, "300,590 345,600 345,630 400,640 440,665"],
  [SE, V, "0,155 40,175 60,190 150,205 270,210 300,185 370,185 420,165 410,190 240,205 190,190 190,170 240,165"],
  [SE, V, "1170,5 1240,0 1225,20 1225,50 1180,90 1150,105 1148,140 1110,160 1105,145 1060,85 1000,70 880,55"],
  [SE, V, "1240,30 1270,5 1330,30 1390,50 1290,50 1230,50 1250,15 1400,5 1430,30 1480,38"],
  [SE, V, "1120,160 1180,135 1218,150 1190,170 1110,205 1060,212 1090,225 1190,205 1200,225 1290,205 1380,185 1460,185 1410,200 1320,220 1240,222 1185,235 1190,260 1160,282 1135,280"],
  [SE, V, "1080,225 1000,235 910,245 905,235 970,240 910,270 870,290 870,315 900,295 990,285 940,275 840,285"],
  [SE, V, "800,190 790,225 830,265 780,270 720,265 660,250 670,230 760,230"],
  [SE, V, "530,215 580,200 640,215 700,200"],
  [SE, B, "700,0 720,45 705,80 750,105 755,150 800,180 825,210 780,215 700,200 720,225 800,220 855,220 855,265 800,250 790,230"],
  [SE, B, "475,330 560,325 590,300 580,270 550,235 500,240 410,260 360,300 450,310 430,335 370,340"],
  [SE, B, "470,265 530,265 560,290 500,300 480,330 550,320 550,290 510,285 470,270"],
  [SE, B, "230,390 250,400 240,440 300,430 300,410 330,405 410,400 415,430 470,470 515,520 460,545 455,520 395,490 320,490 300,520 310,535 400,510 430,490 410,475"],
  [SE, B, "240,440 300,465 380,455 405,475 420,490 370,500"],
  [SE, B, "330,240 430,245 400,265 300,275 240,300"],
  [SE, C, "820,455 880,435 945,415 940,410 985,385 1060,377 1095,382 1110,410 1050,425 1000,425 950,440 890,410"],
  [SE, C, "925,440 1050,450 1090,465 1110,495 1150,520 1190,540 1220,535 1170,515"],
  [SE, C, "755,445 780,470 830,470 880,490 940,500 1040,480 1050,445 990,450 960,465 920,445"],
  [SE, C, "760,480 770,510 830,525 950,510 1010,520 1020,550 980,545 950,520 870,530 800,545 690,520"],
  [SE, C, "440,600 530,570 600,545 640,580 740,590 860,590 860,580 760,560"],
  [SE, C, "100,645 160,650 250,655 380,675 440,685 460,660 520,640"],
  [SE, C, "580,735 620,720 640,770 690,790 740,805 800,815 790,835 740,840 700,860 690,850 640,845 590,850 520,850 525,875 580,895 560,880 560,865"],
  [SE, C, "740,860 780,870 775,900 750,915 760,935 790,955"],
  [SE, N, "300,780 340,795 320,785 410,778 460,785 520,798 600,775 720,765 820,768 900,770 950,740 1020,720 1060,755 1120,740"],
  [SE, N, "1020,720 1010,790 1060,775 1110,795 1120,760 1130,725 1160,718 1080,725 950,740 900,710 810,710"],
  [SE, N, "815,705 870,695 920,690 910,680 960,660 1040,640 1100,605 1190,603 1250,615 1250,630 1210,635 1295,640 1300,625 1265,595 1265,557 1200,535 1150,515 1040,513 1010,480 950,465 900,490 840,460 840,520 760,545 700,570 640,600 540,600"],
  [SE, N, "870,490 930,490 1000,480"],
  [SE, G, "0,262 30,275 100,290 190,282 170,260 150,240 120,200 130,170 90,140 100,110 40,90"],
  [SE, G, "190,130 290,80 340,105 330,125 260,145 345,165 280,155 200,140"],
  [SE, G, "435,690 460,660 540,660 610,670 620,710 640,735 700,710 760,715 840,710 960,730 900,750 870,770 945,770 890,785 800,760 740,740 720,715 780,660 960,660 900,675 880,705"],
  [SE, G, "480,550 350,550 320,570 260,545 140,570 200,620 260,625 330,625 420,625 500,630 600,600 700,655 770,700 780,720 850,715"],
  [SE, G, "600,650 690,650 760,690 740,720"],
  [SE, Y, "0,570 50,570 90,540 120,520 150,525 145,515 60,550 90,600 170,600 260,560 340,565 330,590 240,600"],
  [SE, Y, "90,580 140,605 200,610 185,640 240,665 330,680 370,685 460,660 480,640 400,620 350,600"],
  [SE, Y, "0,605 10,600 0,645"],
  [SE, W, "690,718 610,745 520,750 505,770 445,778 510,780 660,790 580,750 510,760 520,780 540,810 510,800 505,820 590,850 620,880 640,910 600,920 640,905 700,940 690,958 710,945 710,900 640,890 590,850 590,800"],
  [SE, W, "600,770 720,770 760,760 820,758 770,785 775,830 740,845 720,835 620,820 520,780"],
  [SE, W, "640,860 760,910 880,905 905,885 955,890 955,910 900,922 820,930 790,960 840,975 895,980 890,990 800,1000"],
  [SE, W, "710,940 780,955 850,942"],
  [SE, W, "740,1022 720,1025 720,1010 760,990 810,980 860,990 880,1020 890,1050 850,1050 820,1065 780,1070 730,1060 705,1045 720,1025"],
  [SE, W, "895,1040 945,1050 890,1045 910,1015 945,1025 890,1055"],
];

const CLOUDS: Cloud[] = [
  [NW, R, 950, 300, 75, 40, 40], [NW, R, 1120, 400, 120, 45, 220], [NW, R, 1110, 440, 40, 20, 40], [NW, R, 1270, 425, 100, 25, 60],
  [NW, R, 595, 360, 60, 14, 40], [NW, R, 450, 550, 110, 28, 90], [NW, R, 480, 590, 90, 35, 80], [NW, R, 500, 620, 80, 45, 70], [NW, R, 680, 630, 25, 15, 25],
  [NW, R, 1420, 830, 50, 20, 40], [NW, R, 1100, 915, 25, 12, 20], [NW, R, 1450, 1075, 70, 14, 50],
  [NW, P, 370, 600, 55, 60, 60], [NW, P, 620, 660, 60, 40, 40], [NW, P, 780, 790, 70, 40, 60], [NW, P, 640, 840, 60, 25, 50],
  [NW, P, 430, 1020, 55, 25, 45], [NW, P, 525, 830, 12, 10, 14], [NW, P, 400, 520, 80, 20, 40],
  [NW, Y, 580, 690, 50, 25, 40], [NW, Y, 900, 690, 110, 60, 90], [NW, Y, 1090, 700, 120, 55, 150], [NW, Y, 1440, 1010, 60, 40, 50], [NW, Y, 620, 730, 110, 25, 50],
  [NW, C, 980, 710, 120, 40, 140], [NW, C, 1110, 700, 60, 25, 60], [NW, C, 390, 1100, 80, 60, 330], [NW, C, 540, 1080, 90, 50, 140], [NW, C, 460, 1140, 140, 50, 230],
  [NW, C, 770, 565, 30, 14, 30],
  [NW, B, 810, 745, 90, 25, 60], [NW, B, 1150, 710, 110, 30, 100], [NW, B, 1260, 705, 90, 18, 50],
  [NW, W, 1180, 660, 40, 30, 40], [NW, W, 860, 1120, 120, 25, 180], [NW, W, 970, 1140, 60, 28, 150], [NW, W, 1020, 590, 80, 16, 40],
  [NW, G, 760, 800, 90, 18, 50], [NW, G, 880, 960, 130, 30, 100], [NW, G, 790, 975, 55, 15, 60], [NW, G, 800, 1030, 60, 30, 40], [NW, G, 960, 845, 50, 20, 30],
  [NW, N, 1400, 530, 100, 40, 170], [NW, N, 1300, 490, 80, 18, 50], [NW, N, 1450, 585, 60, 18, 60],
  [NW, P, 350, 1140, 36, 20, 30],

  [NE, V, 1145, 212, 55, 16, 60], [NE, W, 85, 310, 18, 14, 22], [NE, W, 85, 376, 22, 7, 20], [NE, N, 70, 397, 30, 8, 25], [NE, N, 200, 510, 80, 25, 50],
  [NE, Y, 90, 510, 75, 40, 80], [NE, Y, 440, 440, 30, 20, 30], [NE, Y, 355, 490, 55, 18, 50], [NE, Y, 290, 620, 60, 35, 80], [NE, Y, 130, 580, 40, 20, 30],
  [NE, W, 250, 530, 60, 25, 50], [NE, W, 370, 650, 50, 45, 60], [NE, W, 520, 630, 120, 20, 70], [NE, W, 1050, 435, 70, 18, 50],
  [NE, R, 700, 490, 70, 22, 60], [NE, R, 500, 610, 110, 25, 150], [NE, R, 700, 570, 130, 35, 110], [NE, R, 870, 570, 70, 20, 60], [NE, R, 845, 470, 40, 15, 40],
  [NE, O, 840, 455, 35, 20, 35], [NE, O, 870, 570, 50, 18, 40], [NE, O, 1055, 565, 24, 12, 160], [NE, O, 1240, 470, 60, 20, 60], [NE, O, 1210, 500, 60, 18, 50],
  [NE, C, 740, 620, 100, 35, 150], [NE, C, 1240, 655, 80, 14, 60], [NE, C, 1040, 570, 30, 14, 30], [NE, C, 720, 650, 60, 15, 40],
  [NE, W, 1240, 630, 130, 40, 140], [NE, W, 1000, 650, 90, 40, 80], [NE, W, 680, 610, 90, 40, 80],
  [NE, B, 550, 775, 28, 14, 50], [NE, B, 775, 760, 10, 8, 40], [NE, B, 960, 685, 50, 18, 40], [NE, B, 850, 790, 40, 22, 40],
  [NE, C, 1090, 885, 60, 30, 50], [NE, V, 1110, 900, 60, 20, 60], [NE, C, 960, 850, 40, 14, 40],
  [NE, R, 130, 990, 110, 30, 220], [NE, R, 270, 985, 100, 30, 110], [NE, R, 130, 905, 100, 16, 80], [NE, R, 30, 960, 90, 50, 70],
  [NE, Y, 80, 985, 80, 22, 80], [NE, Y, 60, 1100, 120, 60, 60], [NE, Y, 250, 1140, 110, 45, 60],
  [NE, C, 60, 960, 110, 60, 100], [NE, C, 130, 1050, 80, 16, 50], [NE, C, 500, 970, 110, 12, 50], [NE, C, 330, 930, 60, 20, 50], [NE, C, 340, 1000, 110, 40, 50],
  [NE, B, 330, 1000, 60, 22, 50], [NE, B, 880, 975, 70, 40, 100], [NE, B, 780, 1060, 140, 45, 200], [NE, B, 740, 1110, 140, 55, 230], [NE, B, 930, 1140, 80, 40, 110], [NE, B, 820, 1150, 200, 50, 200],
  [NE, R, 390, 1080, 70, 35, 90], [NE, R, 480, 1110, 130, 50, 100], [NE, R, 650, 1060, 120, 50, 80], [NE, P, 640, 1140, 90, 30, 80], [NE, P, 500, 1120, 60, 30, 50],
  [NE, C, 980, 1040, 60, 40, 80], [NE, C, 700, 1060, 110, 45, 90], [NE, C, 1080, 1060, 90, 40, 70], [NE, C, 820, 990, 60, 20, 40],
  [NE, O, 960, 1100, 70, 35, 60], [NE, V, 1150, 1130, 50, 40, 50], [NE, V, 1340, 1140, 70, 30, 50], [NE, V, 1040, 1035, 30, 14, 30], [NE, P, 930, 1080, 20, 40, 40], [NE, V, 1270, 1165, 100, 25, 40],

  [SW, C, 480, 30, 160, 38, 160], [SW, C, 430, 80, 50, 28, 50], [SW, P, 365, 10, 45, 25, 40],
  [SW, B, 450, 100, 100, 35, 60], [SW, B, 540, 225, 65, 18, 70], [SW, B, 930, 220, 70, 16, 50], [SW, B, 590, 170, 40, 12, 30],
  [SW, V, 390, 165, 65, 40, 60], [SW, V, 370, 190, 50, 50, 50], [SW, V, 570, 110, 60, 30, 30], [SW, V, 440, 340, 70, 22, 50], [SW, V, 340, 285, 16, 12, 14], [SW, V, 500, 310, 70, 30, 40],
  [SW, O, 700, 215, 35, 25, 50], [SW, O, 480, 340, 40, 40, 40], [SW, O, 425, 460, 105, 40, 110], [SW, O, 560, 470, 80, 50, 110], [SW, O, 700, 475, 90, 18, 130], [SW, O, 500, 515, 170, 30, 100], [SW, O, 380, 560, 55, 40, 50], [SW, O, 480, 590, 70, 20, 50], [SW, O, 640, 580, 50, 20, 30],
  [SW, W, 740, 335, 110, 35, 230], [SW, W, 790, 290, 80, 30, 70], [SW, W, 640, 345, 90, 22, 70], [SW, W, 460, 340, 60, 12, 50], [SW, W, 700, 450, 50, 18, 60], [SW, W, 825, 420, 40, 10, 40],
  [SW, Y, 820, 500, 50, 22, 40], [SW, Y, 800, 535, 50, 14, 40], [SW, Y, 915, 680, 30, 12, 20],
  [SW, N, 750, 530, 60, 20, 70], [SW, N, 430, 570, 70, 30, 60], [SW, N, 900, 660, 40, 35, 90], [SW, N, 690, 630, 40, 14, 50], [SW, N, 790, 700, 70, 16, 50], [SW, N, 540, 560, 80, 35, 40],
  [SW, R, 510, 560, 80, 40, 160], [SW, R, 400, 610, 80, 18, 100], [SW, R, 460, 600, 90, 25, 60], [SW, R, 620, 570, 90, 14, 50], [SW, R, 480, 695, 100, 28, 70], [SW, R, 560, 880, 35, 14, 30], [SW, R, 480, 1160, 20, 14, 24], [SW, R, 510, 990, 30, 14, 22],
  [SW, P, 1110, 640, 90, 30, 100], [SW, P, 910, 655, 70, 22, 70], [SW, P, 1180, 680, 45, 25, 30],
  [SW, G, 650, 770, 40, 12, 40], [SW, G, 520, 1000, 40, 12, 30], [SW, G, 1160, 150, 50, 30, 24], [SW, G, 1390, 245, 70, 22, 50], [SW, G, 1230, 155, 40, 10, 30], [SW, G, 1130, 210, 20, 15, 16],
  [SW, O, 1380, 55, 50, 12, 40], [SW, V, 1400, 160, 110, 18, 70], [SW, O, 1350, 185, 45, 18, 26], [SW, Y, 1480, 590, 25, 25, 22], [SW, Y, 1410, 630, 30, 10, 20],
  [SW, B, 370, 850, 25, 30, 22], [SW, O, 1500, 85, 14, 12, 10],

  [SE, O, 90, 90, 110, 30, 100], [SE, O, 190, 130, 110, 40, 100], [SE, O, 430, 95, 50, 18, 40], [SE, O, 100, 215, 60, 25, 40], [SE, O, 730, 275, 60, 20, 40], [SE, O, 640, 325, 60, 16, 60], [SE, O, 1030, 30, 50, 30, 40],
  [SE, G, 240, 125, 90, 35, 130], [SE, G, 60, 90, 60, 18, 40], [SE, G, 130, 200, 50, 40, 50], [SE, G, 185, 275, 22, 14, 26],
  [SE, V, 40, 165, 80, 28, 60], [SE, V, 240, 175, 60, 28, 70], [SE, V, 140, 210, 90, 25, 80], [SE, V, 240, 270, 110, 40, 120], [SE, V, 580, 210, 60, 16, 60], [SE, V, 740, 220, 110, 32, 100], [SE, V, 1060, 235, 60, 22, 70], [SE, V, 890, 285, 60, 18, 40], [SE, V, 1310, 25, 90, 26, 80],
  [SE, V, 400, 180, 45, 20, 30],
  [SE, B, 260, 340, 110, 45, 190], [SE, B, 350, 290, 100, 40, 90], [SE, B, 520, 290, 70, 40, 40], [SE, B, 750, 210, 80, 20, 60], [SE, B, 830, 20, 140, 28, 150], [SE, B, 990, 25, 80, 35, 100], [SE, B, 380, 490, 70, 35, 30], [SE, B, 700, 5, 120, 18, 80],
  [SE, P, 220, 360, 70, 38, 110], [SE, P, 620, 155, 45, 30, 50], [SE, P, 1010, 105, 100, 28, 100], [SE, P, 1070, 125, 50, 25, 50], [SE, P, 640, 430, 70, 20, 40], [SE, P, 420, 600, 90, 35, 70], [SE, P, 520, 640, 80, 35, 50], [SE, P, 840, 605, 22, 8, 22], [SE, P, 1010, 640, 25, 16, 30], [SE, P, 1250, 755, 70, 20, 40], [SE, P, 220, 300, 16, 22, 22], [SE, P, 400, 185, 40, 16, 30], [SE, P, 200, 135, 90, 20, 40],
  [SE, P, 580, 10, 40, 28, 34], [SE, P, 395, 850, 25, 12, 16],
  [SE, Y, 150, 590, 110, 35, 80], [SE, Y, 280, 640, 120, 40, 60], [SE, Y, 370, 610, 90, 50, 50],
  [SE, C, 290, 590, 100, 40, 60], [SE, C, 170, 645, 70, 10, 70], [SE, C, 430, 560, 100, 40, 90], [SE, C, 590, 590, 100, 45, 130], [SE, C, 760, 535, 110, 18, 80], [SE, C, 950, 490, 110, 35, 110], [SE, C, 600, 710, 50, 30, 50], [SE, C, 500, 640, 110, 30, 80], [SE, C, 720, 850, 60, 20, 50], [SE, C, 940, 10, 70, 14, 60], [SE, C, 640, 570, 60, 25, 50], [SE, C, 1175, 528, 30, 12, 24],
  [SE, G, 270, 600, 110, 50, 100], [SE, G, 400, 570, 80, 20, 40], [SE, G, 560, 640, 60, 35, 60], [SE, G, 860, 725, 55, 20, 130], [SE, G, 890, 770, 50, 18, 50], [SE, G, 450, 680, 26, 14, 24], [SE, G, 590, 610, 50, 14, 50],
  [SE, N, 640, 605, 60, 35, 70], [SE, N, 1010, 645, 50, 22, 80], [SE, N, 960, 480, 60, 16, 40], [SE, N, 870, 700, 60, 14, 40], [SE, N, 1050, 755, 80, 32, 40], [SE, N, 700, 565, 30, 10, 40],
  [SE, W, 590, 785, 80, 35, 80], [SE, W, 660, 880, 80, 28, 90], [SE, W, 740, 850, 40, 25, 50], [SE, W, 810, 985, 35, 20, 50], [SE, W, 885, 1045, 30, 14, 40], [SE, W, 920, 1025, 28, 14, 18], [SE, W, 760, 770, 40, 12, 26], [SE, W, 740, 945, 60, 10, 24],
];

const PATHS = [
  ...CLOUDS.map((c) => ({ d: cloudPath(c), color: c[1] })),
  ...TRACKS.map((t) => ({ d: trackPath(t), color: t[1] })),
];

function TracksGraph() {
  return (
    <svg className="shrink-0" width="972" height="804" viewBox="921 87 972 804" fontSize="12.3">
      <g transform="translate(921 87)"><Bezel w={1010} h={804} /></g>
      <rect x="1003" y="90" width="900" height="746" fill="#e8e8e8" />
      <rect x="1003" y="90" width="900" height="745" fill="#555" />
      <rect x="1004" y="91" width="900" height="744" />
      <svg x="1004" y="91" width="889" height="744" viewBox="1004 91 889 744">
        <g fill="none" shapeRendering="crispEdges" strokeWidth="1">
          {PATHS.map((p, i) => <path key={i} d={p.d} stroke={p.color} />)}
        </g>
      </svg>
      <g shapeRendering="crispEdges" stroke="#000">
        <path d="M995 91.5h5M995 832.5h5M995 835.5h5" />
        {range(19).map((i) => <path key={i} d={`M995 ${Math.floor(461.5 + (i - 9) * 37) + 0.5}h5`} />)}
        {range(10).map((i) => <path key={i} d={`M${Math.floor(1004.3 + i * 99) + 0.5} 845v5`} />)}
      </g>
      <text x="993" y="97" textAnchor="end">10,0069</text>
      {range(19).map((i) => <text key={i} x="993" y={467 + (i - 9) * 37} textAnchor="end">{9 - i}</text>)}
      <text x="993" y="840" textAnchor="end">-10,0745</text>
      <text x="1004.5" y="864" textAnchor="middle">1,42008E-5</text>
      {range(9).map((i) => <text key={i} x={1102.5 + i * 99} y="864" textAnchor="middle">{i + 1}</text>)}
      <text x="1498" y="883" textAnchor="middle">x</text>
      <text transform="translate(936 463) rotate(-90)" textAnchor="middle">y</text>
    </svg>
  );
}

/* ---------- panels ---------- */
function ColorRamp() {
  return (
    <div className="flex w-[52px] shrink-0 pt-[256px] pl-[4px]">
      <div className="h-[251px] w-[20px] shrink-0 border border-black bg-linear-to-b from-[#1c1c1c] to-black to-90%">
        <div className="h-[5px] border-b-2 border-black bg-white" />
      </div>
      <svg width="28" height="260" className="shrink-0" fontSize="12.3">
        <g shapeRendering="crispEdges" stroke="#000">
          {range(39).map((i) => <path key={i} d={`M2 ${Math.floor(10.3 + i * 6.03) + 0.5}h3`} />)}
          <path d="M2 6.5h5M2 233.5h5M2 245.5h5" />
        </g>
        <text x="7.5" y="12">99</text>
        <text x="7.5" y="251">0</text>
      </svg>
    </div>
  );
}

const FRAME_MAJORS = [9, 38.5, 70.5, 102.5, 133.5, 165.5, 196.5];

function LeftPanel() {
  return (
    <div className="flex h-[948px] w-[432px] shrink-0 flex-col border-2 border-t-[#d8d8d8] border-r-[#5a5a5a] border-b-[#5a5a5a] border-l-[#d8d8d8] bg-[#b2b2b2]">
      <div className="flex h-[22px] shrink-0 pt-[3px] pl-[16px]"><L>Movie Directory</L></div>
      <div className="flex h-[60px] shrink-0 pl-[15px]">
        <Well className="flex h-[60px] w-[319px]">
          <div className="flex w-[10px] shrink-0 items-center justify-center">
            <svg width="7" height="11" viewBox="0 0 7 11" fill="none" stroke="#000" shapeRendering="crispEdges">
              <path d="M0.5 0.5h3v3h-3zM3.5 3.5v4M3.5 7h3v3h-3z" />
            </svg>
          </div>
          <div className="flex-1 bg-[#fafafa] pt-[3px] pl-[2px] text-[12.43px] leading-[17px]">
            C:\Users\Praktikum\Desktop\SoSe2024\Federico<br />Jonathan\New folder
          </div>
        </Well>
        <div className="ml-[12px] flex w-[36px] items-center justify-center border-2 border-t-[#c4c4c4] border-r-[#6a6a6a] border-b-[#6a6a6a] border-l-[#c4c4c4] bg-linear-to-b from-[#bcbcbc] via-[#a2a2a2] to-[#b2b2b2]">
          <svg width="20" height="13" viewBox="0 0 20 13" stroke="#000" strokeWidth="0.9">
            <path d="M1 11.5V3L3 1H6L8 3H15V5.5H6L2 11.5Z" fill="#ffff00" />
            <path d="M6 5.5H19L14 11.5H2Z" fill="#6a6a6a" />
          </svg>
        </div>
      </div>
      <div className="flex h-[96px] shrink-0">
        <div className="flex w-[99px] shrink-0 flex-col pt-[7px]">
          <L className="ml-[18px] text-[12.7px]">Load Movie</L>
          <GreenButton className="-mt-[6px] ml-[13px]" />
        </div>
        <div className="flex w-[214px] shrink-0 flex-col pt-[10px]">
          <L className="ml-[1px]">Frame Number</L>
          <Slider
            w={210} h={60} x0={2} bar={200} barH={13} knob={32} drop={5}
            ticks={range(31).map((i) => 9 + i * 6.25).filter((x) => !FRAME_MAJORS.some((m) => Math.abs(m - x) < 3))}
            majors={[...FRAME_MAJORS, 8]}
            labels={[[7, "-1"], [39, "50"], [71, "100"], [103, "150"], [134, "200"], [166, "250"], [196.5, "299"]]}
          />
        </div>
        <div className="flex pt-[29px]">
          <Spinner />
          <Well className="mt-[1px] h-[27px] w-[54px] bg-[#fafafa] pt-[3px] pl-[2px] leading-[17px]">39</Well>
        </div>
      </div>
      <ImageGraph />
      <div className="flex h-[108px] shrink-0 flex-col">
        <L className="mt-[7px] ml-[14px]">Tracking Threshold</L>
        <div className="flex h-[52px] pt-[2px]">
          <Spinner className="mt-[1px] ml-[12px]" />
          <Well className="mt-[2px] h-[27px] w-[74px] bg-[#fafafa] pt-[3px] pl-[2px] leading-[17px]">61,9658</Well>
          <Slider
            w={250} h={50} x0={6} bar={244} barH={16} knob={157} drop={4}
            ticks={range(41).filter((i) => i % 8).map((i) => 12 + i * 5.86)}
            majors={range(6).map((i) => 12 + i * 46.9)}
            labels={range(6).map((i): [number, string] => [11.5 + i * 46.9, String(i * 20)])}
          />
        </div>
        <L className="mt-[9px] ml-[27px]">Tracked Positions</L>
      </div>
      <svg className="ml-[22px] shrink-0" width="384" height="324">
        <Bezel w={384} h={324} />
        <rect x="3" y="3" width="377" height="317" />
      </svg>
    </div>
  );
}

function CursorLegend() {
  return (
    <div className="flex h-[39px] w-[300px] border border-t-[#c8c8c8] border-r-[#555] border-b-[#777] border-l-[#cfcfcf] bg-linear-to-r from-[#cfcfcf] from-0% via-[#bfbfbf] via-8% to-[#b4b4b4] pt-[7px] pl-[10px]">
      <div className="flex h-[24px] w-[280px] border-[3px] border-t-[#8c8c8c] border-r-[#c8c8c8] border-b-[#cccccc] border-l-[#a4a4a4]">
        <div className="flex w-[256px] bg-white leading-[17px]">
          <div className="flex w-[121px] items-center border-r border-[#c0c0c0]">
            <svg width="36" height="16" className="shrink-0">
              <path d="M11 8.5H18" stroke="#888" strokeDasharray="1 1" />
              <rect x="18" y="1" width="16" height="14" />
              <path d="M26.5 1V5M26.5 11V15M24 5.5L29 10.5M29 5.5L24 10.5" stroke="#ffff30" />
            </svg>
            <span className="-mt-[1px] h-[16px] bg-[#ffff00] pr-[1px] pl-[2px] text-[11.9px] leading-[15px]">fit until here</span>
          </div>
          <div className="w-[45px] border-r border-[#c0c0c0] pl-[5px] text-[12.3px] leading-[16px]">136</div>
          <div className="flex-1 pl-[5px] text-[12.2px] leading-[16px]">1212,12</div>
        </div>
        <div className="flex flex-1 flex-col justify-between bg-[#c0c0c0]">
          <div className="h-[4px] border-b border-[#555] bg-[#c8c8c8]" />
          <div className="h-[4px] border-t border-b border-t-[#ddd] border-b-[#555] bg-[#bbb]" />
        </div>
      </div>
    </div>
  );
}

function MiddleColumn() {
  return (
    <div className="flex w-[411px] shrink-0 flex-col pl-[14px]">
      <div className="flex h-[34px] shrink-0 items-end text-[11.9px]">
        <div className="ml-[2px] flex h-[23px] w-[56px] justify-center rounded-tl-[3px] border-t-2 border-r border-l-2 border-t-[#c6c6c6] border-r-[#8a8a8a] border-l-[#c6c6c6] pt-[1px] pl-[1px]">
          <L>Images</L>
        </div>
        <div className="relative z-10 -mb-[4px] flex h-[29px] w-[71px] justify-center rounded-t-[3px] border-t-2 border-r-2 border-l-2 border-t-[#c6c6c6] border-r-[#7a7a7a] border-l-[#c6c6c6] bg-[#b4b4b4] pt-[1px] text-[11.8px]">
          <L className="-ml-[2px]">Track file</L>
        </div>
        <L className="mb-[4px] ml-[178px]">Data source</L>
      </div>
      <div className="flex h-[100px] w-[372px] shrink-0 border-[3px] border-t-[#c4c4c4] border-r-[#8a8a8a] border-b-[#8a8a8a] border-l-[#bebebe] bg-[#b4b4b4]">
        <div className="flex w-[145px] shrink-0 flex-col pt-[27px]">
          <L className="ml-[17px]">Load track file</L>
          <GreenButton className="-mt-[3px] ml-[29px]" />
        </div>
        <div className="flex w-[97px] shrink-0 flex-col pt-[20px]">
          <L>Track file</L>
          <L>dimensions</L>
          <div className="flex pt-[1px] pl-[3px]">
            <Spinner />
            <Well className="mt-[1px] -ml-px h-[27px] w-[54px] bg-[#fafafa] pt-[3px] pl-[3px] leading-[17px]">3</Well>
          </div>
        </div>
        <div className="flex flex-col pt-[41px] pl-[3px]">
          <L className="ml-[1px] text-[11.7px]">delimiter (\t)</L>
          <Classic className="mt-[1px] h-[23px] w-[100px] pt-px pr-px pb-px pl-[4px]">
            <Inset className="bg-[#a8a8a8] pl-[1px] leading-[16px]">\t</Inset>
          </Classic>
        </div>
      </div>
      <L className="mt-[9px] mb-[2px] ml-[4px] text-[12.1px]">{"<r²>(t)"}</L>
      <MsdGraph />
      <div className="flex h-[39px] shrink-0">
        <CursorLegend />
        <div className="ml-[12px] flex h-[37px] w-[59px] items-center justify-center border border-t-[#c4c4c4] border-r-[#555] border-b-[#777] border-l-[#cfcfcf] bg-linear-to-r from-[#d0d0d0] via-[#bfbfbf] via-25% to-[#a8a8a8]">
          <svg width="32" height="32" viewBox="-16 -16 32 32" fill="none" stroke="#000" strokeWidth="1">
            <path d="M0 -15.5L7 -8 0 -0.7 -7 -8ZM0 0.7L7 8 0 15.5 -7 8ZM-8 -7L-0.7 0 -8 7 -15.5 0ZM8 -7L15.5 0 8 7 0.7 0Z" />
          </svg>
        </div>
      </div>
      <div className="flex h-[64px] shrink-0">
        <GreenButton className="mt-[7px] ml-[3px]" />
        <L className="mt-[24px] w-[96px]">Evaluate</L>
        <div className="flex w-[102px] shrink-0 flex-col pt-[17px]">
          <L className="ml-[12px] text-[12.3px]">Pixlesize [µm]</L>
          <div className="-mt-[2px] flex pl-[1px]">
            <Spinner />
            <Well className="mt-[2px] -ml-[1px] h-[26px] w-[54px] bg-[#fafafa] pt-[2px] pl-[2px] leading-[17px]">0,54</Well>
          </div>
        </div>
        <div className="flex flex-col pt-[17px]">
          <L className="ml-[12px]">Framerate [Hz]</L>
          <div className="-mt-[2px] flex pl-[1px]">
            <Spinner />
            <Well className="mt-[2px] -ml-[1px] h-[26px] w-[54px] bg-[#fafafa] pt-[2px] pl-[3px] leading-[17px]">5</Well>
          </div>
        </div>
      </div>
      <L className="mb-[4px] ml-[7px]">{"<r²>(t) Advanced Fit"}</L>
      <div className="ml-[5px] flex shrink-0"><FitGraph /></div>
    </div>
  );
}

function Coefficients({ title, values, spin, width }: { title: string; values: string[]; spin: boolean; width: string }) {
  return (
    <div className="flex flex-col">
      <L className="mb-[1px] ml-[3px] pt-px text-[12.4px]">{title}</L>
      <div className="flex">
        <Classic className="mt-px h-[23px] w-[32px] p-px">
          <MiniArrows />
          <Inset className="pl-px leading-[19px]">0</Inset>
        </Classic>
        <Classic className={"mt-px h-[52px] flex-col p-px " + width}>
          {values.map((v, i) => (
            <div key={i} className="flex flex-1 border border-t-[#5a5a5a] border-r-[#dcdcdc] border-b-[#dcdcdc] border-l-[#5a5a5a] p-px">
              {spin && <MiniArrows />}
              <Inset className="pl-[2px] leading-[20px]">{v}</Inset>
            </div>
          ))}
        </Classic>
      </div>
    </div>
  );
}

function Readouts() {
  return (
    <div className="flex w-[310px] shrink-0 flex-col pt-[8px] pl-[7px]">
      <L className="ml-px text-[12.8px] font-medium">D [µm²/s]</L>
      <Well className="h-[27px] w-[79px] bg-[#d2d2d2] pt-[3px] pl-[3px] text-[12.3px] leading-[17px]">0,0143814</Well>
      <L className="mt-[7px] ml-px text-[11.8px]">SDlin (rel%)</L>
      <Well className="mt-[4px] h-[25px] w-[78px] bg-[#d2d2d2] pt-px pl-[3px] text-[11.6px] leading-[17px]">9,28557</Well>
    </div>
  );
}

function FormulaBlock() {
  return (
    <div className="flex w-[379px] shrink-0 flex-col pt-[6px]">
      <div className="flex h-[36px] shrink-0 pl-px">
        <L className="mt-[5px] w-[128px]">Advanced Fit Formula</L>
        <Classic className="h-[24px] w-[180px] pt-px pr-px pb-px pl-[4px]">
          <Inset className="bg-[#acacac] pl-px leading-[19px]">y=4*a0*x+(a1*x)^2;</Inset>
        </Classic>
      </div>
      <div className="flex pl-px">
        <div className="flex w-[112px] shrink-0">
          <Coefficients title="Initial Guess Coefficients" values={["0,10", "0,10"]} spin width="w-[63px]" />
        </div>
        <div className="flex w-[104px] shrink-0 flex-col pt-[24px] text-[12.9px]">
          <L className="tracking-[0.12px]">a0 = D [µm^2/s]</L>
          <L className="mt-[9px] -ml-px">a1 = v [µm/s]</L>
        </div>
        <Coefficients title="Best Fit Coefficients" values={["0,014387", "0,000602"]} spin={false} width="w-[108px]" />
      </div>
    </div>
  );
}

function ResidueBlock() {
  return (
    <div className="flex w-[161px] shrink-0 flex-col pt-[5px] text-[11.9px]">
      <div className="flex h-[31px] shrink-0">
        <L className="mt-[5px] w-[67px] pl-[2px] text-[11.7px]">Max Images</L>
        <Spinner className="ml-[3px]" />
        <Well className="mt-px h-[24px] w-[53px] bg-[#fafafa] pl-[2px] leading-[18px]">300</Well>
      </div>
      <L className="ml-[3px]">residue</L>
      <Well className="ml-[2px] h-[25px] w-[54px] bg-[#d2d2d2] pl-[3px] text-[11.6px] leading-[19px]">
        <div className="w-[43px] overflow-hidden">0,002602</div>
      </Well>
      <div className="-mt-px flex">
        <L className="mt-[4px] ml-px w-[61px] text-[11.3px]">SDnl (rel%)</L>
        <Well className="h-[25px] w-[78px] bg-[#d2d2d2] pl-[3px] text-[11.6px] leading-[18px]">9,29636</Well>
      </div>
    </div>
  );
}

function RightColumn() {
  return (
    <div className="flex w-[972px] shrink-0 flex-col">
      <L className="mt-[9px] mb-[2px] ml-[7px] text-[12px]">Tracks</L>
      <TracksGraph />
      <div className="flex h-[112px] w-[972px] shrink-0">
        <Readouts />
        <FormulaBlock />
        <ResidueBlock />
        <div className="flex flex-col pt-[28px] whitespace-nowrap">
          <L>Export movie tracks</L>
          <GreenButton className="mt-[3px] ml-[29px]" />
        </div>
      </div>
    </div>
  );
}

function Watermark() {
  return (
    <svg className="absolute top-[980px] left-[1590px]" width="260" height="56" viewBox="1590 980 260 56">
      <g style={{ filter: "drop-shadow(1px 1px 1px rgba(90,90,90,.6))" }} fill="#f4f4f4" fillOpacity="0.78">
        <path d="M1597 984Q1612 984 1621 989Q1629 995 1637 1012L1640 1026 1620 1036H1609L1613 1014Q1612 999 1597 984Z" />
        <path d="M1630 997L1637 988 1645 984H1658L1651 988 1637 1010Z" />
        <path d="M1625 1022L1642 1013 1647 1021 1638 1029 1618 1036Z" />
        <g fontWeight="700" fontFamily='"Open Sans", sans-serif'>
          <text x="1659" y="1003" fontSize="25" textLength="131" lengthAdjust="spacingAndGlyphs">NATIONAL</text>
          <text x="1651" y="1028" fontSize="25" textLength="180" lengthAdjust="spacingAndGlyphs">INSTRUMENTS</text>
        </g>
        <text x="1831" y="1015" fontSize="8">™</text>
      </g>
    </svg>
  );
}

export default function App() {
  return (
    <div
      className="relative flex h-[1036px] w-[1900px] overflow-hidden bg-[#f0f0f0] text-[12.5px] text-black"
      style={{ fontFamily: '"Open Sans", sans-serif' }}
    >
      <Defs />
      <ColorRamp />
      <div className="flex w-[1841px] shrink-0 flex-col overflow-hidden pt-[9px]">
        <div className="flex h-[36px] w-[1872px] shrink-0 items-center justify-center border border-[#4a4a4a] bg-linear-to-b from-[#ffd0d0] via-[#ffdcdc] via-30% to-[#f9c0c0] pt-[3px] text-[12.3px] font-bold shadow-[inset_4px_0_4px_#ffe9e9,inset_0_2px_1px_#ffe4e4,inset_0_-2px_1px_#c08c8c]">
          STOP
        </div>
        <div className="flex shrink-0 pt-[12px]">
          <LeftPanel />
          <div className="ml-[24px] flex h-[948px] w-[1400px] shrink-0 border-2 border-t-[#d8d8d8] border-r-[#5a5a5a] border-b-[#5a5a5a] border-l-[#d8d8d8] bg-[#b2b2b2]">
            <MiddleColumn />
            <RightColumn />
          </div>
        </div>
      </div>
      <div className="flex w-[7px] shrink-0 flex-col border-l border-white bg-[#f0f0f0] pt-[185px]">
        <div className="h-[724px] bg-[#cdcdcd]" />
      </div>
      <Watermark />
    </div>
  );
}
